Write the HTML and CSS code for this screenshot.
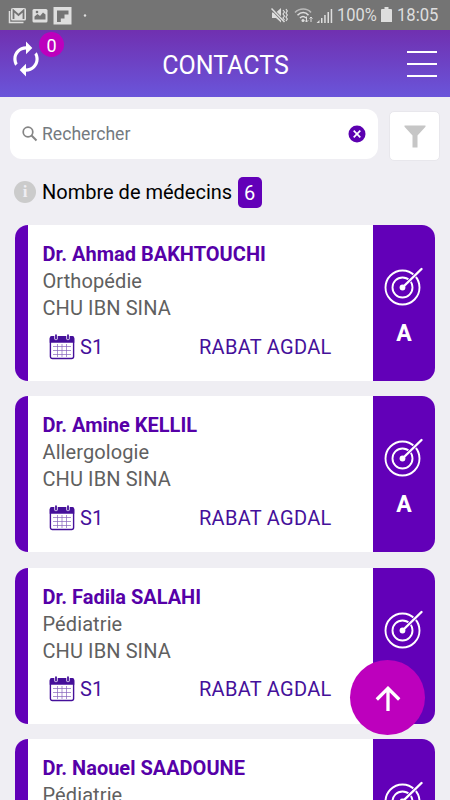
FILE: index.html
```html
<!DOCTYPE html>
<html lang="fr">
<head>
    <meta charset="UTF-8">
    <title>Contacts</title>
    <link rel="stylesheet" href="styles.css">
</head>
<body>
    <!-- Shared icons -->
    <svg class="sprite">
        <symbol id="calendar" viewBox="0 0 26 26">
            <rect x="1.4" y="2.9" width="23.2" height="21.6" rx="2" fill="#fff" stroke="currentColor" stroke-width="1.4"/>
            <path d="M.7 8.700V4a2 2 0 0 1 2-2h20.600a2 2 0 0 1 2 2v4.700z" fill="currentColor"/>
            <path d="M4 12.500h18M4 16.500h18M4 20.500h18M8.500 10v13M13 10v13M17.500 10v13" stroke="currentColor" stroke-width=".7" opacity=".65"/>
            <path d="M7 1.500v3M19 1.500v3" stroke="#fff" stroke-width="3.400" stroke-linecap="round"/>
            <path d="M7 1.200v3.500M19 1.200v3.500" stroke="currentColor" stroke-width="1.800" stroke-linecap="round"/>
        </symbol>
        <symbol id="target" viewBox="0 0 40 40">
            <g fill="none" stroke="#fff" stroke-width="1.9">
                <circle cx="18.5" cy="21.5" r="17"/>
                <circle cx="18.5" cy="21.5" r="10"/>
                <path d="M18.500 21.500L37.500 3" stroke="#6200b8" stroke-width="3.800"/>
                <path d="M18.500 21.500L37.500 3" stroke-width="2.400" stroke-linecap="round"/>
            </g>
            <circle cx="18.5" cy="21.5" r="2.9" fill="#fff"/>
        </symbol>
    </svg>

    <div class="status-bar">
        <svg class="status-left" viewBox="0 0 90 30">
            <path d="M9.500 11v11.500h14" fill="none" stroke="#dedede" stroke-width="1.500"/>
            <rect x="11" y="8" width="15" height="12.500" rx="1.500" fill="#dedede"/>
            <path d="M13.500 19v-8.500l5 4.500 5-4.500V19" fill="none" stroke="#747474" stroke-width="1.800"/>
            <rect x="32.500" y="9" width="15" height="13.500" rx="1.500" fill="#dedede"/>
            <path d="M34.500 19.500v-3l3-2.500 2.500 2 3-3.500 2.500 2v5z" fill="#747474"/>
            <circle cx="37" cy="12" r="1.300" fill="#747474"/>
            <rect x="53.500" y="7" width="18" height="17.500" fill="#dedede"/>
            <path d="M57 10.500h11.500v4h-4v4h-3.700v3.500H57z" fill="#747474"/>
            <circle cx="85" cy="15.500" r="1.200" fill="#dedede"/>
        </svg>
        <div class="status-right">
            <svg class="status-signal" viewBox="0 0 64 30">
                <path d="M2 12.500h4l5-4.500v14.500l-5-4.500H2z" fill="#dedede"/>
                <path d="M1.500 8.500l13 13.500" stroke="#747474" stroke-width="3"/>
                <path d="M1.500 8.500l13 13.500" stroke="#dedede" stroke-width="1.500"/>
                <path d="M13 10l1.500 2-1.500 2 1.500 2-1.500 2 1.500 2M16 9l1.300 2-1.300 2 1.300 2-1.300 2 1.300 2-1.300 2" fill="none" stroke="#dedede" stroke-width="1.200"/>
                <g fill="none" stroke="#dedede" stroke-width="1.600">
                    <path d="M25 12.500c4.500-4.600 12-4.600 16 0" opacity=".65"/>
                    <path d="M27.500 15.200c3.500-3.600 8-3.600 11 0"/>
                    <path d="M30 18c2-2 4-2 6 0"/>
                    <path d="M36.500 16.500v5.500m-1.700-1.700l1.700 1.700 1.700-1.700M41 22v-5m-1.500 1.500L41 17l1.500 1.500" stroke-width="1"/>
                </g>
                <circle cx="33" cy="20.500" r="1.500" fill="#dedede"/>
                <path d="M46.500 23l3-3v3zM51 18h1.500v5H51zM54.200 15h1.500v8h-1.500zM57.500 12h1.500v11h-1.500zM60.700 9h1.500v14h-1.500z" fill="#dedede"/>
            </svg>
            <span class="battery-level">100%</span>
            <svg class="battery" viewBox="0 0 11 16"><path d="M3.500 0h4v2H10q1 0 1 1v12H0V3q0-1 1-1h2.500z" fill="#dedede"/></svg>
            <span class="clock">18:05</span>
        </div>
    </div>

    <header class="header">
        <button class="sync">
            <svg viewBox="0 0 24 24"><path d="M12 6v3l4-4-4-4v3c-4.420 0-8 3.580-8 8 0 1.570.460 3.030 1.240 4.260L6.700 14.800c-.450-.830-.700-1.790-.700-2.800 0-3.310 2.690-6 6-6zm6.760 1.740L17.300 9.200c.440.840.700 1.790.700 2.800 0 3.310-2.690 6-6 6v-3l-4 4 4 4v-3c4.420 0 8-3.580 8-8 0-1.570-.460-3.030-1.240-4.260z" fill="#fff"/></svg>
            <span class="sync-count">0</span>
        </button>
        <h1>CONTACTS</h1>
        <button class="menu"><span></span><span></span><span></span></button>
    </header>

    <div class="search-row">
        <div class="search">
            <svg class="search-icon" viewBox="0 0 16 16"><g fill="none" stroke="#858585" stroke-width="1.700"><circle cx="6" cy="6" r="4.800"/><path d="M9.300 9.300l5.200 5.200" stroke-width="2"/></g></svg>
            <span class="placeholder">Rechercher</span>
            <svg class="clear" viewBox="0 0 18 18"><circle cx="9" cy="9" r="8.500" fill="#5c00b0"/><path d="M5.700 5.700l6.600 6.600M12.300 5.700l-6.600 6.600" stroke="#fff" stroke-width="1.700"/></svg>
        </div>
        <button class="filter">
            <svg viewBox="0 0 22 23"><path d="M.5.500h21v1.300l-8 8.700v12h-5v-12l-8-8.700z" fill="#c6c6c6"/></svg>
        </button>
    </div>

    <div class="count-row">
        <span class="info">i</span>
        <span>Nombre de médecins</span>
        <span class="count">6</span>
    </div>

    <div class="list">
        <div class="card">
            <div class="card-body">
                <div class="name">Dr. Ahmad BAKHTOUCHI</div>
                <div>Orthopédie</div>
                <div>CHU IBN SINA</div>
                <div class="card-foot">
                    <svg class="calendar"><use href="#calendar"/></svg>
                    <span class="week">S1</span>
                    <span class="city">RABAT AGDAL</span>
                </div>
            </div>
            <div class="card-side">
                <svg class="target"><use href="#target"/></svg>
                <span>A</span>
            </div>
        </div>

        <div class="card">
            <div class="card-body">
                <div class="name">Dr. Amine KELLIL</div>
                <div>Allergologie</div>
                <div>CHU IBN SINA</div>
                <div class="card-foot">
                    <svg class="calendar"><use href="#calendar"/></svg>
                    <span class="week">S1</span>
                    <span class="city">RABAT AGDAL</span>
                </div>
            </div>
            <div class="card-side">
                <svg class="target"><use href="#target"/></svg>
                <span>A</span>
            </div>
        </div>

        <div class="card">
            <div class="card-body">
                <div class="name">Dr. Fadila SALAHI</div>
                <div>Pédiatrie</div>
                <div>CHU IBN SINA</div>
                <div class="card-foot">
                    <svg class="calendar"><use href="#calendar"/></svg>
                    <span class="week">S1</span>
                    <span class="city">RABAT AGDAL</span>
                </div>
            </div>
            <div class="card-side">
                <svg class="target"><use href="#target"/></svg>
            </div>
        </div>

        <div class="card">
            <div class="card-body">
                <div class="name">Dr. Naouel SAADOUNE</div>
                <div>Pédiatrie</div>
            </div>
            <div class="card-side">
                <svg class="target"><use href="#target"/></svg>
            </div>
        </div>
    </div>

    <button class="to-top">
        <svg viewBox="0 0 26 26"><path d="M13 25V2.500M1.800 13.500L13 2.300l11.200 11.200" fill="none" stroke="#fff" stroke-width="3.300"/></svg>
    </button>
</body>
</html>
```

FILE: styles.css
```css
* {
    box-sizing: border-box;
}
body {
    margin: 0;
    height: 800px;
    display: flex;
    flex-direction: column;
    overflow: hidden;
    position: relative;
    background-color: #efeef3;
    font-family: Roboto, sans-serif;
    color: #000;
}
button {
    border: none;
    padding: 0;
    background: none;
    font-family: inherit;
}
svg {
    display: block;
    flex: none;
}
.sprite {
    display: none;
}

/* Status bar */
.status-bar {
    flex: none;
    height: 30px;
    display: flex;
    justify-content: space-between;
    background-color: #747474;
    color: #dedede;
}
.status-left {
    width: 90px;
    height: 30px;
}
.status-right {
    display: flex;
    align-items: center;
    padding-right: 11px;
    font-size: 18.5px;
    line-height: 32px;
}
.status-signal {
    width: 64px;
    height: 30px;
    margin-right: 3px;
}
.battery-level {
    width: 40px;
    white-space: nowrap;
    transform: scaleX(.89);
    transform-origin: left;
}
.battery {
    width: 11px;
    height: 16px;
    margin: 0 5px 0 4px;
}
.clock {
    width: 42px;
    white-space: nowrap;
    transform: scaleX(.9);
    transform-origin: left;
}

/* Header */
.header {
    flex: none;
    height: 67px;
    display: flex;
    align-items: center;
    justify-content: space-between;
    padding: 0 13px 0 7px;
    background: linear-gradient(#7030b0, #6a55da);
}
.header h1 {
    margin: 4px 1px 0 0;
    font-size: 25px;
    font-weight: 400;
    line-height: 30px;
    color: #fff;
}
.sync {
    position: relative;
    width: 38px;
    margin-top: -9px;
}
.sync svg {
    width: 38px;
    height: 38px;
}
.sync-count {
    position: absolute;
    left: 32px;
    top: -8px;
    width: 25px;
    height: 25px;
    border-radius: 50%;
    background-color: #bd00bd;
    color: #fff;
    font-size: 18px;
    line-height: 27px;
    text-align: center;
}
.menu {
    width: 30px;
    display: flex;
    flex-direction: column;
    gap: 10px;
}
.menu span {
    height: 2px;
    background-color: #fff;
}

/* Search */
.search-row {
    flex: none;
    display: flex;
    align-items: flex-start;
    gap: 11px;
    padding: 12px 10px 0;
}
.search {
    flex: 1;
    height: 50px;
    display: flex;
    align-items: center;
    padding: 0 12px;
    border-radius: 12px;
    background-color: #fff;
}
.search-icon {
    width: 16px;
    height: 16px;
}
.placeholder {
    flex: 1;
    margin-left: 4px;
    font-size: 17.6px;
    color: #747a80;
}
.clear {
    width: 18px;
    height: 18px;
}
.filter {
    width: 51px;
    height: 50px;
    margin-top: 2px;
    display: flex;
    align-items: center;
    justify-content: center;
    border: 1px solid #e8e7ec;
    border-radius: 5px;
    background-color: #fff;
}
.filter svg {
    width: 22px;
    height: 23px;
}

/* Counter */
.count-row {
    flex: none;
    height: 64px;
    display: flex;
    align-items: center;
    padding: 0 14px 2px;
    font-size: 20px;
}
.info {
    width: 22px;
    height: 22px;
    margin-right: 6px;
    border-radius: 50%;
    background-color: #cbcbcb;
    color: #efeef3;
    font: bold 17px/22px "Liberation Serif", serif;
    text-align: center;
}
.count {
    width: 24px;
    height: 31px;
    margin-left: 5.5px;
    border-radius: 5px;
    background-color: #6200b8;
    color: #fff;
    line-height: 33px;
    text-align: center;
}

/* Doctors */
.list {
    display: flex;
    flex-direction: column;
    gap: 15.3px;
    padding: 0 15px;
}
.card {
    flex: none;
    height: 156px;
    display: flex;
    border-radius: 13px;
    background-color: #fff;
    overflow: hidden;
}
.card::before {
    content: "";
    width: 12.5px;
    background-color: #6200b8;
}
.card-body {
    flex: 1;
    padding: 16px 0 0 15px;
    font-size: 20px;
    line-height: 27px;
    letter-spacing: .1px;
    color: #606060;
}
.name {
    font-weight: 700;
    letter-spacing: 0;
    color: #5600a8;
}
.card-foot {
    display: flex;
    align-items: center;
    margin-top: 11.5px;
    padding-left: 6.5px;
    color: #45109a;
}
.calendar {
    width: 26px;
    height: 26px;
    margin-top: -1px;
    color: #45109a;
}
.week {
    width: 119px;
    margin-left: 5px;
}
.city {
    letter-spacing: .28px;
}
.card-side {
    width: 62px;
    display: flex;
    flex-direction: column;
    align-items: center;
    padding-top: 41px;
    background-color: #6200b8;
    color: #fff;
    font-size: 23px;
    font-weight: 700;
    line-height: 28px;
}
.card-side span {
    margin-top: 13.5px;
}
.target {
    width: 40px;
    height: 40px;
}

.to-top {
    position: absolute;
    left: 350px;
    top: 660px;
    width: 75px;
    height: 75px;
    display: flex;
    align-items: center;
    justify-content: center;
    border-radius: 50%;
    background-color: #bd00bd;
}
.to-top svg {
    width: 26px;
    height: 26px;
    margin-top: 3px;
}
```
